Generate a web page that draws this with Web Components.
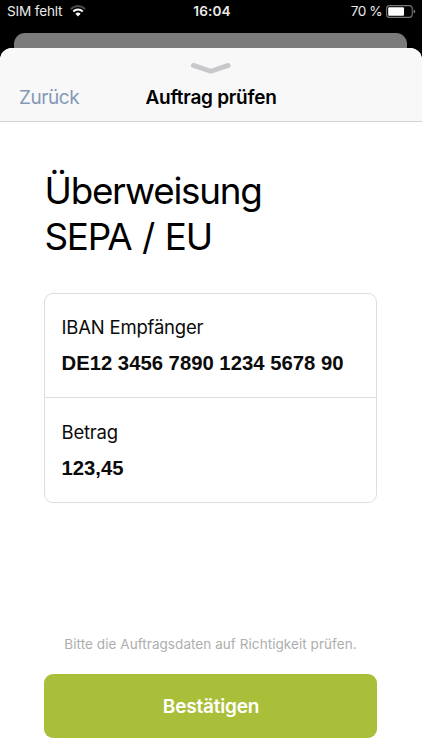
<!DOCTYPE html>
<html lang="de">
<head>
<meta charset="utf-8">
<meta name="viewport" content="width=device-width, initial-scale=1">
<title>Auftrag prüfen</title>
<style>
	html, body {
		margin: 0;
		height: 100%;
		overflow: hidden;
		background: #000;
		font-family: Inter, "Liberation Sans", sans-serif;
	}
</style>
</head>
<body>
<review-screen>
	<status-bar slot="status" carrier="SIM fehlt" time="16:04" battery="70"></status-bar>
	<sheet-header slot="header" back="Zurück">Auftrag prüfen</sheet-header>
	<span slot="title">Überweisung<br>SEPA / EU</span>
	<order-card>
		<order-field label="IBAN Empfänger">DE12 3456 7890 1234 5678 90</order-field>
		<order-field label="Betrag">123,45</order-field>
	</order-card>
	<span slot="hint">Bitte die Auftragsdaten auf Richtigkeit prüfen.</span>
	<primary-button slot="action">Bestätigen</primary-button>
</review-screen>

<script>
class BaseElement extends HTMLElement {
	constructor() {
		super();
		this.attachShadow({ mode: 'open' });
	}

	connectedCallback() {
		this.render();
	}

	render() {
		this.shadowRoot.innerHTML = `
			${this.style()}
			${this.template()}
		`;
	}
}

class StatusBar extends BaseElement {
	style() {
		return `
			<style>
				:host {
					display: grid;
					grid-template-columns: 1fr auto 1fr;
					align-items: center;
					height: 22px;
					padding: 0 6px 0 7px;
					color: #e9e9e9;
					font-size: 13.6px;
					line-height: 22px;
				}
				.left, .right {
					display: flex;
					align-items: center;
				}
				.left { gap: 7.5px; }
				.right {
					justify-content: flex-end;
					gap: 4px;
				}
				.carrier { letter-spacing: -0.18px; }
				.percent { letter-spacing: -0.5px; }
				.time {
					padding-left: 1px;
					font-weight: 600;
					letter-spacing: 0.1px;
				}
				svg { display: block; }
			</style>
		`;
	}

	template() {
		const level = Number(this.getAttribute('battery'));

		return `
			<div class="left">
				<span class="carrier">${this.getAttribute('carrier')}</span>
				<svg width="16" height="12" viewBox="0 0 16 12" fill="none">
					<path d="M.9 4a10 10 0 0 1 14.2 0" stroke="#4b4b4b" stroke-width="2.1"/>
					<path d="M3.3 6.5a6.6 6.6 0 0 1 9.4 0" stroke="#fff" stroke-width="2.1"/>
					<path d="M5.4 8.8a3.7 3.7 0 0 1 5.2 0L8 11.5z" fill="#fff"/>
				</svg>
			</div>
			<span class="time">${this.getAttribute('time')}</span>
			<div class="right">
				<span class="percent">${level} %</span>
				<svg width="30" height="13" viewBox="0 0 30 13">
					<rect x=".6" y=".6" width="25.6" height="11.8" rx="3" fill="none" stroke="#777" stroke-width="1.1"/>
					<rect x="2.2" y="2.2" width="${22.6 * level / 100}" height="8.6" rx="1" fill="#fff"/>
					<path d="M27.6 4.4q1.7.5 1.7 2.1t-1.7 2.1z" fill="#777"/>
				</svg>
			</div>
		`;
	}
}

class SheetHeader extends BaseElement {
	style() {
		return `
			<style>
				:host {
					display: block;
					box-sizing: border-box;
					height: 74px;
					padding-top: 14px;
					border-bottom: 1px solid #d2d2d4;
					background: #f8f8f9;
				}
				.grabber {
					display: block;
					margin: 0 auto;
				}
				.bar {
					display: grid;
					grid-template-columns: 1fr auto 1fr;
					align-items: center;
					height: 46px;
					padding: 0 19px;
					line-height: 24px;
				}
				.back {
					color: #8499b5;
					font-size: 19px;
					letter-spacing: -0.45px;
				}
				.title {
					color: #000;
					font-size: 19px;
					font-weight: 600;
					letter-spacing: -0.25px;
				}
			</style>
		`;
	}

	template() {
		return `
			<svg class="grabber" width="42" height="13" viewBox="0 0 42 13" fill="none">
				<path d="M3.4 3.4 20.8 9.2l17.4-5.8" stroke="#c7c7cc" stroke-width="4.8" stroke-linecap="round" stroke-linejoin="miter"/>
			</svg>
			<div class="bar">
				<span class="back">${this.getAttribute('back')}</span>
				<span class="title"><slot></slot></span>
			</div>
		`;
	}
}

class OrderField extends BaseElement {
	style() {
		return `
			<style>
				:host {
					display: block;
					box-sizing: border-box;
					height: 103px;
					padding: 20px 16px 0 16.5px;
					color: #0b0b0b;
				}
				.label {
					font-size: 18.5px;
					line-height: 26px;
					letter-spacing: -0.2px;
				}
				.value {
					margin-top: 10px;
					font: bold 20.3px/26px "Liberation Sans", Arial, sans-serif;
				}
			</style>
		`;
	}

	template() {
		return `
			<div class="label">${this.getAttribute('label')}</div>
			<div class="value"><slot></slot></div>
		`;
	}
}

class OrderCard extends BaseElement {
	style() {
		return `
			<style>
				:host {
					display: block;
					border: 1px solid #dedede;
					border-radius: 9px;
					background: #fff;
				}
				::slotted(order-field:not(:first-child)) {
					height: 105px;
					padding-top: 21px;
					border-top: 1px solid #dedede;
				}
			</style>
		`;
	}

	template() {
		return `<slot></slot>`;
	}
}

class PrimaryButton extends BaseElement {
	style() {
		return `
			<style>
				:host { display: block; }
				button {
					display: block;
					width: 100%;
					height: 64px;
					padding: 2px 0 0 1px;
					border: 0;
					border-radius: 9px;
					background: #aabf39;
					color: #fff;
					font: 600 19px/24px Inter, "Liberation Sans", sans-serif;
					letter-spacing: -0.2px;
				}
			</style>
		`;
	}

	template() {
		return `<button type="button"><slot></slot></button>`;
	}
}

class ReviewScreen extends BaseElement {
	style() {
		return `
			<style>
				:host {
					display: flex;
					flex-direction: column;
					height: 100vh;
					background: #000;
				}
				.behind {
					flex: none;
					height: 15px;
					margin: 11px 15px 0 14px;
					border-radius: 11px 11px 0 0;
					background: #7b7b7b;
				}
				.sheet {
					flex: 1;
					display: flex;
					flex-direction: column;
					overflow: hidden;
					border-radius: 12px 12px 0 0;
					background: #fff;
				}
				.stack {
					flex: 1;
					display: flex;
					flex-direction: column;
				}
				main {
					flex: 1;
					display: flex;
					flex-direction: column;
					padding: 46px 45px 12px 44px;
				}
				h1 {
					margin: 0 0 33px;
					padding-left: 0.5px;
					color: #000;
					font-size: 36.8px;
					font-weight: 400;
					line-height: 46px;
					letter-spacing: -1.25px;
					word-spacing: 1.6px;
				}
				.hint {
					margin: auto 0 20px;
					color: #aeaeae;
					font-size: 13.5px;
					line-height: 20px;
					letter-spacing: 0.06px;
					text-align: center;
					white-space: nowrap;
				}
			</style>
		`;
	}

	template() {
		return `
			<slot name="status"></slot>
			<div class="stack">
				<div class="behind"></div>
				<div class="sheet">
					<slot name="header"></slot>
					<main>
						<h1><slot name="title"></slot></h1>
						<slot></slot>
						<p class="hint"><slot name="hint"></slot></p>
						<slot name="action"></slot>
					</main>
				</div>
			</div>
		`;
	}
}

customElements.define('status-bar', StatusBar);
customElements.define('sheet-header', SheetHeader);
customElements.define('order-field', OrderField);
customElements.define('order-card', OrderCard);
customElements.define('primary-button', PrimaryButton);
customElements.define('review-screen', ReviewScreen);
</script>
</body>
</html>
